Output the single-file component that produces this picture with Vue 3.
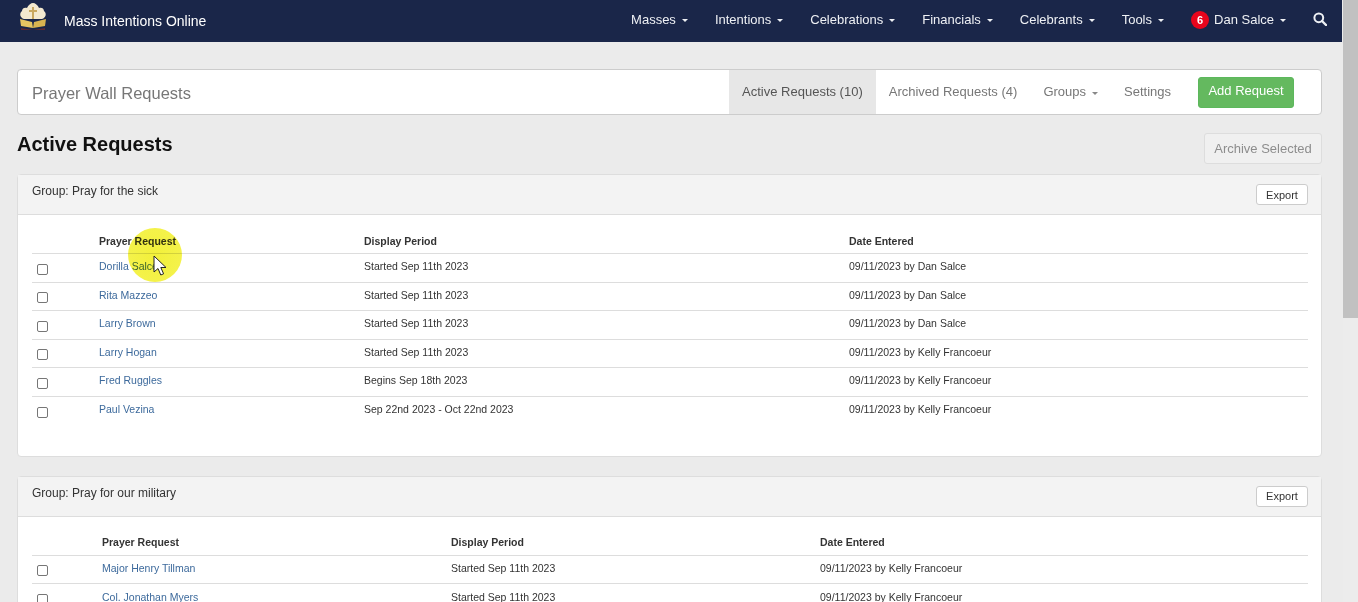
<script setup>
const nav = ['Masses', 'Intentions', 'Celebrations', 'Financials', 'Celebrants', 'Tools']
const groups = [
  {
    name: 'Group: Pray for the sick',
    cls: 'sick',
    rows: [
      ['Dorilla Salce', 'Started Sep 11th 2023', '09/11/2023 by Dan Salce'],
      ['Rita Mazzeo', 'Started Sep 11th 2023', '09/11/2023 by Dan Salce'],
      ['Larry Brown', 'Started Sep 11th 2023', '09/11/2023 by Dan Salce'],
      ['Larry Hogan', 'Started Sep 11th 2023', '09/11/2023 by Kelly Francoeur'],
      ['Fred Ruggles', 'Begins Sep 18th 2023', '09/11/2023 by Kelly Francoeur'],
      ['Paul Vezina', 'Sep 22nd 2023 - Oct 22nd 2023', '09/11/2023 by Kelly Francoeur']
    ]
  },
  {
    name: 'Group: Pray for our military',
    cls: 'military',
    rows: [
      ['Major Henry Tillman', 'Started Sep 11th 2023', '09/11/2023 by Kelly Francoeur'],
      ['Col. Jonathan Myers', 'Started Sep 11th 2023', '09/11/2023 by Kelly Francoeur']
    ]
  }
]
</script>

<template>
  <div class="screen">
    <div class="page">
      <header class="topbar">
        <svg class="logo" viewBox="0 0 30 32" width="30" height="32">
          <path d="M6 17c-4-1-5-6-2-8 0-3 3-4 5-3 1-3 4-5 6-5s5 2 6 5c2-1 5 0 5 3 3 2 2 7-2 8z" fill="#f3e9cf" />
          <path d="M14 5h2v3h3v2h-3v7h-2v-7h-3V8h3z" fill="#c9a860" />
          <path d="M2 17l12 3 1 6-12-2z" fill="#e7c662" />
          <path d="M28 17l-12 3-1 6 12-2z" fill="#d9b450" />
          <path d="M3 26l12 2 12-2v2H3z" fill="#5b2a32" />
        </svg>
        <span class="brand">Mass Intentions Online</span>
        <nav class="topnav">
          <a v-for="item in nav" :key="item" class="topitem">{{ item }}<i class="caret"></i></a>
          <a class="topitem user"><b class="badge">6</b>Dan Salce<i class="caret"></i></a>
          <svg class="search" viewBox="0 0 14 14" width="14" height="14">
            <circle cx="5.8" cy="5.8" r="4.4" fill="none" stroke="#eef0f4" stroke-width="2" />
            <path d="M9 9l4 4" stroke="#eef0f4" stroke-width="2.4" stroke-linecap="round" />
          </svg>
        </nav>
      </header>

      <main class="content">
        <section class="subnav">
          <h2 class="subtitle">Prayer Wall Requests</h2>
          <div class="subitems">
            <a class="subitem active">Active Requests (10)</a>
            <a class="subitem">Archived Requests (4)</a>
            <a class="subitem">Groups<i class="caret grey"></i></a>
            <a class="subitem">Settings</a>
            <button class="add">Add Request</button>
          </div>
        </section>

        <div class="headline">
          <h1>Active Requests</h1>
          <button class="archive">Archive Selected</button>
        </div>

        <section v-for="g in groups" :key="g.name" class="panel" :class="g.cls">
          <div class="panel-head">
            <span>{{ g.name }}</span>
            <button class="export">Export</button>
          </div>
          <div class="panel-body">
            <table>
              <thead>
                <tr>
                  <th class="c0"></th>
                  <th class="c1">Prayer Request</th>
                  <th class="c2">Display Period</th>
                  <th>Date Entered</th>
                </tr>
              </thead>
              <tbody>
                <tr v-for="r in g.rows" :key="r[0]">
                  <td class="check"><span class="box"></span></td>
                  <td><a class="link">{{ r[0] }}</a></td>
                  <td>{{ r[1] }}</td>
                  <td>{{ r[2] }}</td>
                </tr>
              </tbody>
            </table>
          </div>
        </section>
      </main>
    </div>

    <aside class="scrollbar"><div class="thumb"></div></aside>

    <div class="spot"></div>
    <svg class="pointer" viewBox="0 0 14 22" width="14" height="22">
      <path d="M1 1v16l4-3.500 2.800 6.500 2.800-1.200-2.800-6.300h5.200z" fill="#fff" stroke="#222" stroke-width="1" stroke-linejoin="round" />
    </svg>
  </div>
</template>

<style>
html, body { margin: 0; overflow: hidden; }
</style>

<style scoped>
.screen {
  position: relative;
  display: flex;
  height: 602px;
  overflow: hidden;
  background: #ebebeb;
  font-family: "Liberation Sans", Arial, sans-serif;
  color: #333;
}
.page { flex: 1; min-width: 0; }
.scrollbar {
  width: 15px;
  margin-left: 1px;
  background: #ececec;
}
.thumb { height: 318px; background: #c1c1c1; }

.topbar {
  display: flex;
  align-items: center;
  height: 42px;
  background: #1a2649;
  color: #eef0f4;
  padding: 0 15px 0 18px;
  box-sizing: border-box;
  width: 1342px;
}
.logo { flex: none; margin-top: -6px; }
.brand { margin-left: 16px; font-size: 14px; color: #fff; }
.topnav { margin-left: auto; display: flex; align-items: center; }
.topitem { display: flex; align-items: center; font-size: 13px; margin-left: 27px; margin-top: -3px; }
.user { margin-left: 27px; }
.badge {
  display: inline-block;
  width: 18px;
  height: 18px;
  line-height: 18px;
  border-radius: 50%;
  background: #e8051c;
  color: #fff;
  font-size: 11px;
  text-align: center;
  margin-right: 5px;
}
.caret {
  display: inline-block;
  border-top: 4px solid currentColor;
  border-left: 3px solid transparent;
  border-right: 3px solid transparent;
  border-top-width: 3px;
  margin-left: 6px;
  margin-top: 2px;
}
.caret.grey { color: #888; }
.search { margin-left: 27px; margin-top: -5px; }

.content { padding: 27px 20px 0 17px; }

.subnav {
  display: flex;
  align-items: stretch;
  justify-content: space-between;
  height: 46px;
  box-sizing: border-box;
  background: #fff;
  border: 1px solid #ccc;
  border-radius: 4px;
}
.subtitle { margin: 0 0 0 14px; font-weight: 400; font-size: 16.500px; line-height: 46px; color: #777; }
.subitems { display: flex; align-items: center; padding-right: 27px; }
.subitem { font-size: 13px; color: #777; padding: 0 13px; line-height: 44px; display: flex; align-items: center; }
.subitem.active { background: #e7e7e7; color: #555; }
.add {
  margin-left: 14px;
  width: 96px;
  height: 31px;
  padding: 0 0 3px;
  border: 1px solid #5cb85c;
  border-radius: 3px;
  background: #64b95f;
  color: #fff;
  font: 13px "Liberation Sans", Arial, sans-serif;
}

.headline {
  display: flex;
  justify-content: space-between;
  align-items: flex-start;
  margin-top: 18px;
  height: 41px;
}
.headline h1 { margin: 0; font-size: 20px; line-height: 22px; color: #111; margin-top: 0; }
.archive {
  width: 118px;
  height: 31px;
  padding: 0;
  border: 1px solid #ddd;
  border-radius: 3px;
  background: #f0f0f0;
  color: #8d8d8d;
  font: 13px "Liberation Sans", Arial, sans-serif;
}

.panel {
  background: #fff;
  border: 1px solid #ddd;
  border-radius: 4px;
  margin-bottom: 19px;
}
.panel-head {
  display: flex;
  justify-content: space-between;
  height: 40px;
  box-sizing: border-box;
  padding: 9px 13px 0 14px;
  background: #f3f3f3;
  border-bottom: 1px solid #ddd;
  font-size: 12px;
}
.export {
  width: 52px;
  height: 21px;
  padding: 0;
  border: 1px solid #ccc;
  border-radius: 3px;
  background: #fff;
  color: #333;
  font: 11px "Liberation Sans", Arial, sans-serif;
}
.panel-body { padding: 13px 13px 31px 14px; }
table { width: 100%; border-collapse: collapse; font-size: 10.500px; table-layout: fixed; }
th { text-align: left; font-weight: 700; height: 25px; padding: 0 0 0 0; border-bottom: 1px solid #ddd; color: #333; }
td { height: 28.500px; padding: 0 0 3px; border-bottom: 1px solid #ddd; color: #333; box-sizing: border-box; }
tbody tr:last-child td { border-bottom: 0; }
.link { color: #3d6a9c; }
.check { padding: 3px 0 0 5px; }
.box {
  display: block;
  width: 11px;
  height: 11px;
  box-sizing: border-box;
  border: 1px solid #767676;
  border-radius: 2px;
  background: #fff;
}
.sick .c0 { width: 67px; }
.sick .c1 { width: 265px; }
.sick .c2 { width: 485px; }
.military .c0 { width: 70px; }
.military .c1 { width: 349px; }
.military .c2 { width: 369px; }

.spot {
  position: absolute;
  left: 128px;
  top: 228px;
  width: 54px;
  height: 54px;
  border-radius: 50%;
  background: radial-gradient(circle, #f2f03a 0%, #f4f24a 70%, rgba(246, 244, 120, 0) 100%);
  mix-blend-mode: multiply;
}
.pointer { position: absolute; left: 153px; top: 255px; }
</style>
